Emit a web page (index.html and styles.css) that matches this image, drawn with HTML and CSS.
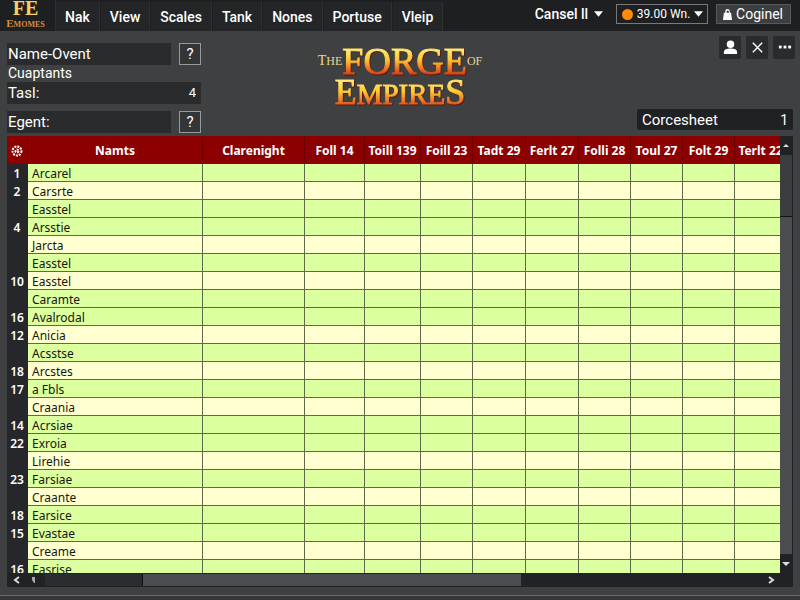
FILE: index.html
```html
<!DOCTYPE html>
<html lang="en">
<head>
<meta charset="utf-8">
<meta name="viewport" content="width=device-width, initial-scale=1">
<title>The Forge of Empires</title>
<link rel="stylesheet" href="styles.css">
</head>
<body>
<header class="topbar">
  <div class="brand"><span class="brand-top">FE</span><span class="brand-bottom">Emomes</span></div>
  <nav class="menu">
    <button type="button">Nak</button>
    <button type="button">View</button>
    <button type="button">Scales</button>
    <button type="button">Tank</button>
    <button type="button">Nones</button>
    <button type="button">Portuse</button>
    <button type="button">Vleip</button>
  </nav>
  <div class="account">
    <button type="button" class="plain">Cansel ll <svg class="caret" viewBox="0 0 10 6"><path d="M0 0h10L5 6z"/></svg></button>
    <button type="button" class="balance"><span class="coin"></span>39.00 Wn. <svg class="caret" viewBox="0 0 10 6"><path d="M0 0h10L5 6z"/></svg></button>
    <button type="button" class="login"><svg class="lock" viewBox="0 0 10 12"><path d="M1 4h1.500V3a2.500 3 0 0 1 5 0v1H9l1 8H0zM4 4h2.500V3a1.200 1.500 0 0 0-2.500 0z" fill-rule="evenodd"/></svg>Coginel</button>
  </div>
</header>

<section class="tools">
  <form class="filters">
    <div class="row">
      <div class="field"><label for="name">Name-Ovent</label><input id="name" type="text"></div>
      <button type="button" class="help">?</button>
    </div>
    <div class="caption">Cuaptants</div>
    <div class="row">
      <div class="field short"><label for="task">Tasl:</label><input id="task" type="text" value="4"></div>
    </div>
    <div class="row last">
      <div class="field"><label for="egent">Egent:</label><input id="egent" type="text"></div>
      <button type="button" class="help">?</button>
    </div>
  </form>

  <h1 class="logo">
    <span class="logo-line"><span class="side">T<small>HE</small></span><span class="fire forge">FORGE</span><span class="side"><small>OF</small></span></span>
    <span class="logo-line"><span class="fire empires">E<small>MPIRE</small>S</span></span>
  </h1>

  <div class="side-tools">
    <div class="icons">
      <button type="button" aria-label="Profile"><svg viewBox="0 0 16 16"><circle cx="8" cy="4.500" r="4"/><path d="M1 15v-2c0-3 3-4 7-4s7 1 7 4v2z"/></svg></button>
      <button type="button" aria-label="Close"><svg viewBox="0 0 16 16"><path class="line" d="M3 3l10 10M13 3L3 13"/></svg></button>
      <button type="button" aria-label="More"><svg viewBox="0 0 16 16"><rect x="2" y="6" width="3" height="3"/><rect x="7" y="6" width="3" height="3"/><rect x="12" y="6" width="3" height="3"/></svg></button>
    </div>
    <div class="sheet-no"><label for="sheet">Corcesheet</label><input id="sheet" type="text" value="1"></div>
  </div>
</section>

<main class="sheet">
  <div class="view">
    <table>
      <colgroup><col class="c-num"><col><col class="c-wide"><col class="c-60"><col class="c-56"><col class="c-52"><col class="c-54"><col class="c-54"><col class="c-52"><col class="c-52"><col class="c-52"><col class="c-52"></colgroup>
      <thead><tr>
        <th><svg class="gear" viewBox="0 0 12 12"><circle cx="6" cy="6" r="4.500"/><circle cx="6" cy="6" r="1.500"/></svg></th>
        <th>Namts</th><th>Clarenight</th><th>Foll 14</th><th>Toill 139</th><th>Foill 23</th><th>Tadt 29</th><th>Ferlt 27</th><th>Folli 28</th><th>Toul 27</th><th>Folt 29</th><th>Terlt 22</th>
      </tr></thead>
      <tbody id="rows"></tbody>
    </table>
  </div>
  <div class="vbar"><span class="up"></span><span class="vthumb"></span><span class="vtrack"></span><span class="down"></span></div>
  <div class="hbar">
    <svg class="arrow" viewBox="0 0 8 8"><path d="M6 1L2 4l4 3"/></svg>
    <svg class="mark" viewBox="0 0 6 8"><path d="M1 1h3v6H3L1 4z"/></svg>
    <span class="hgap"></span><span class="hthumb"></span><span class="hrest"></span>
    <svg class="arrow" viewBox="0 0 8 8"><path d="M2 1l4 3-4 3"/></svg>
  </div>
</main>
<footer class="edge"></footer>
<script src="rows.js"></script>
</body>
</html>
```
FILE: styles.css
```css
* { box-sizing: border-box; }
body {
  margin: 0;
  height: 100vh;
  display: flex;
  flex-direction: column;
  overflow: hidden;
  background: #3e4041;
  color: #fff;
  font: 15px/20px Roboto, sans-serif;
}
button, input {
  font: inherit;
  color: inherit;
  background: none;
  border: 0;
  padding: 0;
  margin: 0;
}
svg { fill: currentColor; display: block; flex: none; }

.topbar {
  flex: none;
  height: 31px;
  display: flex;
  background: #1d1f20;
}
.brand {
  width: 55px;
  padding-right: 4px;
  display: flex;
  flex-direction: column;
  align-items: center;
  justify-content: flex-end;
  overflow: hidden;
  font-family: "Liberation Serif", serif;
  font-weight: bold;
}
.brand-top { font-size: 20px; line-height: 14px; color: #f5cf62; }
.brand-bottom { font-size: 11px; line-height: 16px; color: #d98a3c; font-variant: small-caps; }
.menu { display: flex; gap: 1px; padding-top: 2px; border-left: 1px solid #2e3031; }
.menu button {
  padding: 0 9px;
  background: #232526;
  border-right: 1px solid #2f3132;
  font-weight: 500;
  font-size: 14px;
}
.account {
  margin-left: auto;
  padding: 4px 9px 7px 0;
  display: flex;
  align-items: stretch;
}
.account button { display: flex; align-items: center; white-space: nowrap; }
.caret { width: 9px; height: 6px; }
.plain { gap: 6px; margin-right: 13px; font-weight: 500; font-size: 14px; }
.balance { width: 92px; justify-content: space-between; border: 1px solid #77797a; font-size: 12px; }
.account .balance { padding: 0 4px 0 5px; }
.coin { flex: none; width: 11px; height: 11px; border-radius: 50%; background: #ff8a0c; }
.account .login { gap: 4px; margin-left: 8px; padding: 0 7px 0 6px; background: #3c3e3f; border: 1px solid #56585a; font-size: 14px; }
.lock { width: 9px; height: 11px; }

.tools {
  flex: none;
  height: 105px;
  display: flex;
  justify-content: space-between;
  padding: 0 7px;
}
.filters { flex: 1; padding-top: 12px; }
.row { display: flex; gap: 8px; align-items: center; height: 22px; }
.row.last { margin-top: 7px; }
.caption { line-height: 17px; padding-left: 1px; font-size: 14px; }
.field {
  width: 164px;
  height: 22px;
  padding: 0 5px 0 1px;
  display: flex;
  align-items: center;
  background: #292b2c;
}
.field.short { width: 194px; }
.field input { flex: 1; min-width: 0; width: 0; text-align: right; font-size: 13px; }
.help {
  width: 22px;
  height: 22px;
  background: #333536;
  border: 1px solid #97999a;
}

.logo {
  flex: none;
  margin: 0;
  padding-top: 14px;
  text-align: center;
  font: 38px/32px "Liberation Serif", serif;
}
.logo-line { display: flex; justify-content: center; align-items: center; height: 32px; }
.side { font-size: 14px; line-height: 20px; color: #ecd58c; }
.side small { font-size: 12px; }
.fire {
  background: linear-gradient(#ffe873 16%, #ffc930 46%, #f58a26 66%, #d8431c 90%);
  -webkit-background-clip: text;
  background-clip: text;
  color: transparent;
  -webkit-text-stroke: 1px transparent;
  filter: drop-shadow(1px 1px 0 #5c1c10);
}
.empires { font-size: 36px; }
.empires small { font-size: 29px; }

.side-tools {
  flex: 1;
  display: flex;
  flex-direction: column;
  align-items: flex-end;
  justify-content: space-between;
  padding: 5px 0 6px;
}
.icons { display: flex; gap: 5px; margin-right: -2px; }
.icons button {
  width: 22px;
  height: 23px;
  display: grid;
  place-items: center;
  background: #292b2c;
  border-radius: 2px;
}
.icons svg { width: 15px; height: 15px; }
.line { fill: none; stroke: currentColor; stroke-width: 1.5; }
.sheet-no {
  width: 156px;
  height: 21px;
  padding: 0 5px;
  display: flex;
  align-items: center;
  background: #1f2122;
  border-radius: 2px;
}
.sheet-no input { flex: 1; width: 0; text-align: right; font-size: 14px; }

.sheet {
  flex: 1;
  min-height: 0;
  margin: 0 7px;
  display: grid;
  grid-template: minmax(0, 1fr) 14px / minmax(0, 1fr) 13px;
  background: #202223;
}
.view { overflow: hidden; background: #ffffd0; }
table {
  width: calc(100% + 7px);
  table-layout: fixed;
  border-collapse: separate;
  border-spacing: 0;
  font-family: "Noto Sans", sans-serif;
}
.c-num { width: 21px; }
.c-wide { width: 102px; }
.c-60 { width: 60px; }
.c-56 { width: 56px; }
.c-54 { width: 53px; }
.c-52 { width: 52px; }
thead th {
  height: 28px;
  padding: 2px 0 0;
  background: #8c0000;
  border-right: 1px solid #6f0000;
  font-size: 12px;
  line-height: 18px;
  font-weight: bold;
  white-space: nowrap;
}
.gear { width: 12px; height: 12px; margin: auto; fill: none; stroke: #fff; stroke-width: 2; stroke-dasharray: 2 1; }
tbody td, tbody th {
  height: 18px;
  padding: 2px 3px 0;
  font-size: 12px;
  line-height: 15px;
  border-right: 1px solid #5e6b48;
  border-bottom: 1px solid #5e6b48;
}
tbody td { color: #16180f; background: #ffffd0; white-space: nowrap; }
tbody td.name { padding: 3px 4px 0; line-height: 14px; }
.green td { background: #dcffa0; }
tbody th {
  padding-left: 0;
  padding-right: 0;
  background: #25272a;
  border-color: #25272a;
  font-weight: 600;
  text-align: center;
}

.vbar { display: flex; flex-direction: column; align-items: center; padding-right: 1px; }
.up, .down { flex: none; height: 19px; display: flex; align-items: center; }
.up::before { content: ""; border: 3px solid transparent; border-top: 0; border-bottom: 3px solid #ddd; }
.down::before { content: ""; border: 4px solid transparent; border-bottom: 0; border-top: 4px solid #ddd; }
.vthumb { width: 100%; height: 62px; background: #3b3d3e; border-bottom: 1px solid #111; }
.vtrack { width: 100%; flex: 1; background: #4b4d4e; }
.hbar { grid-column: 1 / -1; display: flex; align-items: center; padding: 0 18px 0 6px; }
.arrow { width: 8px; height: 8px; fill: none; stroke: #ddd; stroke-width: 2; }
.mark { width: 6px; height: 8px; margin: 0 8px 0 10px; fill: #aaa; }
.hgap, .hthumb { height: 12px; }
.hgap { width: 98px; background: #2a2c2d; border-right: 1px solid #111; }
.hthumb { width: 378px; background: #4b4d4e; }
.hrest { flex: 1; }
.edge { flex: none; height: 13px; border-bottom: 5px solid #35353a; }
.edge::after { content: ""; display: block; height: 8px; border-bottom: 1px solid #686b70; }
```
FILE: rows.js
```js
// [row number, name, green background]
const rows = [
  ["1", "Arcarel", 1], ["2", "Carsrte", 0], ["", "Easstel", 1], ["4", "Arsstie", 1],
  ["", "Jarcta", 0], ["", "Easstel", 1], ["10", "Easstel", 0], ["", "Caramte", 1],
  ["16", "Avalrodal", 1], ["12", "Anicia", 0], ["", "Acsstse", 1], ["18", "Arcstes", 0],
  ["17", "a Fbls", 1], ["", "Craania", 0], ["14", "Acrsiae", 1], ["22", "Exroia", 1],
  ["", "Lirehie", 0], ["23", "Farsiae", 1], ["", "Craante", 0], ["18", "Earsice", 1],
  ["15", "Evastae", 1], ["", "Creame", 0], ["16", "Easrise", 1]
];
const body = document.getElementById("rows");
for (const [number, name, green] of rows) {
  const tr = body.insertRow();
  if (green) tr.className = "green";
  const head = document.createElement("th");
  head.scope = "row";
  head.textContent = number;
  tr.append(head);
  const cell = tr.insertCell();
  cell.className = "name";
  cell.textContent = name;
  for (let i = 0; i < 10; i++) tr.insertCell();
}
```
